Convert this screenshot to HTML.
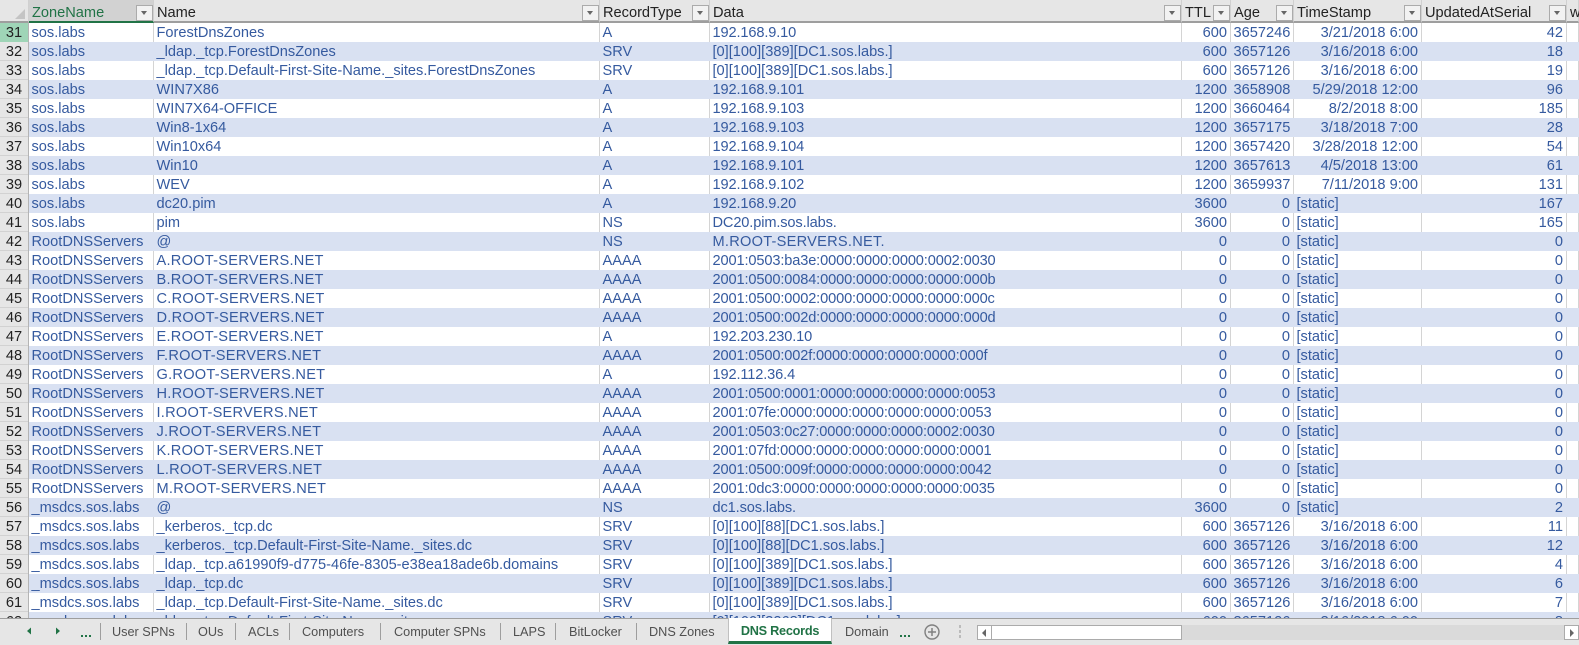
<!DOCTYPE html>
<html><head><meta charset="utf-8"><style>
html,body{margin:0;padding:0;width:1579px;height:644px;overflow:hidden;background:#e6e6e6}
#g{position:absolute;left:0;top:0;width:1579px;height:618px;overflow:hidden;background:#fff}
table{border-collapse:separate;border-spacing:0;table-layout:fixed;width:1579px;font:14.6px "Liberation Sans",sans-serif;color:#355a9f}
td,th{height:19px;padding:2px 2px 0 2.5px;box-sizing:border-box;white-space:nowrap;overflow:hidden;border-right:1px solid #d4d4d4;font-weight:normal;text-align:left;line-height:17px}
tbody th{background:#e6e6e6;color:#222;text-align:center;border-right:1px solid #b4b4b4;padding:2px 0 0 0;box-shadow:inset 0 -1px #d2d2d2}
tbody tr:nth-child(even) td{background:#d9e1f2;border-right-color:#d9e1f2}
tbody tr.sel th{background:#9fd5b7;box-shadow:none}
td:nth-child(6),td:nth-child(7),td:nth-child(8),td:nth-child(9){text-align:right;padding-right:3px}
td.l{text-align:left!important}
td:nth-child(5){letter-spacing:-.13px}
tbody tr:nth-child(2) td:nth-child(5),tbody tr:nth-child(3) td:nth-child(5),tbody tr:nth-child(n+27) td:nth-child(5){letter-spacing:0}
tbody tr:nth-child(n+13):nth-child(-n+25) td:nth-child(3),tbody tr:nth-child(12) td:nth-child(5){letter-spacing:.25px}
thead th{height:23px;background:#e6e6e6;color:#222;border-right:1px solid #d0d0d0;border-bottom:2px solid #9e9e9e;position:relative;overflow:visible;padding:5px 0 0 3px;line-height:16px}
thead th.z{background:#d2d2d2;color:#217346;border-bottom:2px solid #217346}
thead th i{position:absolute;top:5px;right:0;width:15px;height:14px;background:#f2f2f2;border:1px solid #ababab}
thead th i:after{content:"";position:absolute;left:4px;top:5px;border-left:3.5px solid transparent;border-right:3.5px solid transparent;border-top:4px solid #666}
#c{position:absolute;left:15px;top:9px;width:0;height:0;border-style:solid;border-width:0 0 10px 10px;border-color:transparent transparent #c4c4c4 transparent}
#b{position:absolute;left:0;top:618px;width:1579px;height:26px;background:#e6e6e6;border-top:1px solid #9e9e9e;box-sizing:border-box;font:12.7px "Liberation Sans",sans-serif;color:#505050}
#b span{position:absolute;top:5px;line-height:16px;white-space:nowrap}
#b u{position:absolute;top:4px;width:1px;height:17px;background:#9e9e9e}
#t{position:absolute;left:728px;top:-1px;width:104px;height:26px;background:#fff;border-bottom:3px solid #217346;border-left:1px solid #c0c0c0;border-right:1px solid #c0c0c0;box-sizing:border-box;color:#217346;font-weight:bold;text-align:center;line-height:27px;letter-spacing:-.25px}
#s{position:absolute;left:977px;top:6px;width:602px;height:15px;background:#dadada}
</style></head><body>
<div id="g"><table>
<colgroup><col style="width:29px"><col style="width:125px"><col style="width:446px"><col style="width:110px"><col style="width:472px"><col style="width:49px"><col style="width:63px"><col style="width:128px"><col style="width:145px"><col></colgroup>
<thead><tr><th></th><th class="z">ZoneName<i></i></th><th>Name<i></i></th><th>RecordType<i></i></th><th>Data<i></i></th><th>TTL<i></i></th><th>Age<i></i></th><th>TimeStamp<i></i></th><th>UpdatedAtSerial<i></i></th><th>w</th></tr></thead>
<tbody>
<tr class="sel"><th>31</th><td>sos.labs</td><td>ForestDnsZones</td><td>A</td><td>192.168.9.10</td><td>600</td><td>3657246</td><td>3/21/2018 6:00</td><td>42</td><td></td></tr>
<tr><th>32</th><td>sos.labs</td><td>_ldap._tcp.ForestDnsZones</td><td>SRV</td><td>[0][100][389][DC1.sos.labs.]</td><td>600</td><td>3657126</td><td>3/16/2018 6:00</td><td>18</td><td></td></tr>
<tr><th>33</th><td>sos.labs</td><td>_ldap._tcp.Default-First-Site-Name._sites.ForestDnsZones</td><td>SRV</td><td>[0][100][389][DC1.sos.labs.]</td><td>600</td><td>3657126</td><td>3/16/2018 6:00</td><td>19</td><td></td></tr>
<tr><th>34</th><td>sos.labs</td><td>WIN7X86</td><td>A</td><td>192.168.9.101</td><td>1200</td><td>3658908</td><td>5/29/2018 12:00</td><td>96</td><td></td></tr>
<tr><th>35</th><td>sos.labs</td><td>WIN7X64-OFFICE</td><td>A</td><td>192.168.9.103</td><td>1200</td><td>3660464</td><td>8/2/2018 8:00</td><td>185</td><td></td></tr>
<tr><th>36</th><td>sos.labs</td><td>Win8-1x64</td><td>A</td><td>192.168.9.103</td><td>1200</td><td>3657175</td><td>3/18/2018 7:00</td><td>28</td><td></td></tr>
<tr><th>37</th><td>sos.labs</td><td>Win10x64</td><td>A</td><td>192.168.9.104</td><td>1200</td><td>3657420</td><td>3/28/2018 12:00</td><td>54</td><td></td></tr>
<tr><th>38</th><td>sos.labs</td><td>Win10</td><td>A</td><td>192.168.9.101</td><td>1200</td><td>3657613</td><td>4/5/2018 13:00</td><td>61</td><td></td></tr>
<tr><th>39</th><td>sos.labs</td><td>WEV</td><td>A</td><td>192.168.9.102</td><td>1200</td><td>3659937</td><td>7/11/2018 9:00</td><td>131</td><td></td></tr>
<tr><th>40</th><td>sos.labs</td><td>dc20.pim</td><td>A</td><td>192.168.9.20</td><td>3600</td><td>0</td><td class="l">[static]</td><td>167</td><td></td></tr>
<tr><th>41</th><td>sos.labs</td><td>pim</td><td>NS</td><td>DC20.pim.sos.labs.</td><td>3600</td><td>0</td><td class="l">[static]</td><td>165</td><td></td></tr>
<tr><th>42</th><td>RootDNSServers</td><td>@</td><td>NS</td><td>M.ROOT-SERVERS.NET.</td><td>0</td><td>0</td><td class="l">[static]</td><td>0</td><td></td></tr>
<tr><th>43</th><td>RootDNSServers</td><td>A.ROOT-SERVERS.NET</td><td>AAAA</td><td>2001:0503:ba3e:0000:0000:0000:0002:0030</td><td>0</td><td>0</td><td class="l">[static]</td><td>0</td><td></td></tr>
<tr><th>44</th><td>RootDNSServers</td><td>B.ROOT-SERVERS.NET</td><td>AAAA</td><td>2001:0500:0084:0000:0000:0000:0000:000b</td><td>0</td><td>0</td><td class="l">[static]</td><td>0</td><td></td></tr>
<tr><th>45</th><td>RootDNSServers</td><td>C.ROOT-SERVERS.NET</td><td>AAAA</td><td>2001:0500:0002:0000:0000:0000:0000:000c</td><td>0</td><td>0</td><td class="l">[static]</td><td>0</td><td></td></tr>
<tr><th>46</th><td>RootDNSServers</td><td>D.ROOT-SERVERS.NET</td><td>AAAA</td><td>2001:0500:002d:0000:0000:0000:0000:000d</td><td>0</td><td>0</td><td class="l">[static]</td><td>0</td><td></td></tr>
<tr><th>47</th><td>RootDNSServers</td><td>E.ROOT-SERVERS.NET</td><td>A</td><td>192.203.230.10</td><td>0</td><td>0</td><td class="l">[static]</td><td>0</td><td></td></tr>
<tr><th>48</th><td>RootDNSServers</td><td>F.ROOT-SERVERS.NET</td><td>AAAA</td><td>2001:0500:002f:0000:0000:0000:0000:000f</td><td>0</td><td>0</td><td class="l">[static]</td><td>0</td><td></td></tr>
<tr><th>49</th><td>RootDNSServers</td><td>G.ROOT-SERVERS.NET</td><td>A</td><td>192.112.36.4</td><td>0</td><td>0</td><td class="l">[static]</td><td>0</td><td></td></tr>
<tr><th>50</th><td>RootDNSServers</td><td>H.ROOT-SERVERS.NET</td><td>AAAA</td><td>2001:0500:0001:0000:0000:0000:0000:0053</td><td>0</td><td>0</td><td class="l">[static]</td><td>0</td><td></td></tr>
<tr><th>51</th><td>RootDNSServers</td><td>I.ROOT-SERVERS.NET</td><td>AAAA</td><td>2001:07fe:0000:0000:0000:0000:0000:0053</td><td>0</td><td>0</td><td class="l">[static]</td><td>0</td><td></td></tr>
<tr><th>52</th><td>RootDNSServers</td><td>J.ROOT-SERVERS.NET</td><td>AAAA</td><td>2001:0503:0c27:0000:0000:0000:0002:0030</td><td>0</td><td>0</td><td class="l">[static]</td><td>0</td><td></td></tr>
<tr><th>53</th><td>RootDNSServers</td><td>K.ROOT-SERVERS.NET</td><td>AAAA</td><td>2001:07fd:0000:0000:0000:0000:0000:0001</td><td>0</td><td>0</td><td class="l">[static]</td><td>0</td><td></td></tr>
<tr><th>54</th><td>RootDNSServers</td><td>L.ROOT-SERVERS.NET</td><td>AAAA</td><td>2001:0500:009f:0000:0000:0000:0000:0042</td><td>0</td><td>0</td><td class="l">[static]</td><td>0</td><td></td></tr>
<tr><th>55</th><td>RootDNSServers</td><td>M.ROOT-SERVERS.NET</td><td>AAAA</td><td>2001:0dc3:0000:0000:0000:0000:0000:0035</td><td>0</td><td>0</td><td class="l">[static]</td><td>0</td><td></td></tr>
<tr><th>56</th><td>_msdcs.sos.labs</td><td>@</td><td>NS</td><td>dc1.sos.labs.</td><td>3600</td><td>0</td><td class="l">[static]</td><td>2</td><td></td></tr>
<tr><th>57</th><td>_msdcs.sos.labs</td><td>_kerberos._tcp.dc</td><td>SRV</td><td>[0][100][88][DC1.sos.labs.]</td><td>600</td><td>3657126</td><td>3/16/2018 6:00</td><td>11</td><td></td></tr>
<tr><th>58</th><td>_msdcs.sos.labs</td><td>_kerberos._tcp.Default-First-Site-Name._sites.dc</td><td>SRV</td><td>[0][100][88][DC1.sos.labs.]</td><td>600</td><td>3657126</td><td>3/16/2018 6:00</td><td>12</td><td></td></tr>
<tr><th>59</th><td>_msdcs.sos.labs</td><td>_ldap._tcp.a61990f9-d775-46fe-8305-e38ea18ade6b.domains</td><td>SRV</td><td>[0][100][389][DC1.sos.labs.]</td><td>600</td><td>3657126</td><td>3/16/2018 6:00</td><td>4</td><td></td></tr>
<tr><th>60</th><td>_msdcs.sos.labs</td><td>_ldap._tcp.dc</td><td>SRV</td><td>[0][100][389][DC1.sos.labs.]</td><td>600</td><td>3657126</td><td>3/16/2018 6:00</td><td>6</td><td></td></tr>
<tr><th>61</th><td>_msdcs.sos.labs</td><td>_ldap._tcp.Default-First-Site-Name._sites.dc</td><td>SRV</td><td>[0][100][389][DC1.sos.labs.]</td><td>600</td><td>3657126</td><td>3/16/2018 6:00</td><td>7</td><td></td></tr>
<tr><th>62</th><td>_msdcs.sos.labs</td><td>_ldap._tcp.Default-First-Site-Name._sites</td><td>SRV</td><td>[0][100][3268][DC1.sos.labs.]</td><td>600</td><td>3657126</td><td>3/16/2018 6:00</td><td>8</td><td></td></tr>
</tbody></table><div id="c"></div></div>
<div id="b">
<svg style="position:absolute;left:0;top:0" width="100" height="25"><path d="M27 12 L31 8.5 V15.5Z M56 8.5 L60 12 L56 15.5Z" fill="#217346"/><rect x="81" y="16" width="2" height="2" fill="#217346"/><rect x="85" y="16" width="2" height="2" fill="#217346"/><rect x="89" y="16" width="2" height="2" fill="#217346"/></svg>
<u style="left:100px"></u><span style="left:112px">User SPNs</span>
<u style="left:186px"></u><span style="left:198px">OUs</span>
<u style="left:235px"></u><span style="left:248px">ACLs</span>
<u style="left:289px"></u><span style="left:302px">Computers</span>
<u style="left:380px"></u><span style="left:394px">Computer SPNs</span>
<u style="left:500px"></u><span style="left:513px">LAPS</span>
<u style="left:555px"></u><span style="left:569px">BitLocker</span>
<u style="left:636px"></u><span style="left:649px">DNS Zones</span>
<div id="t">DNS Records</div>
<span style="left:845px">Domain</span>
<svg style="position:absolute;left:899px;top:0" width="75" height="25"><rect x="1" y="16" width="2" height="2" fill="#217346"/><rect x="5" y="16" width="2" height="2" fill="#217346"/><rect x="9" y="16" width="2" height="2" fill="#217346"/><circle cx="33" cy="13" r="7" fill="none" stroke="#808080" stroke-width="1.4"/><path d="M29 13H37M33 9V17" stroke="#808080" stroke-width="1.5"/><rect x="60" y="6" width="2" height="3" fill="#bbb"/><rect x="60" y="11" width="2" height="3" fill="#bbb"/><rect x="60" y="16" width="2" height="3" fill="#bbb"/></svg>
<div id="s">
<div style="position:absolute;left:0;top:0;width:205px;height:15px;background:#fff;border:1px solid #ababab;box-sizing:border-box"></div>
<div style="position:absolute;left:0;top:0;width:15px;height:15px;border:1px solid #ababab;box-sizing:border-box;background:#fff"></div>
<div style="position:absolute;left:5px;top:4px;border:4px solid transparent;border-right:4px solid #666;border-left:0"></div>
<div style="position:absolute;left:587px;top:0;width:15px;height:15px;border:1px solid #ababab;box-sizing:border-box;background:#fff"></div>
<div style="position:absolute;left:593px;top:4px;border:4px solid transparent;border-left:4px solid #666;border-right:0"></div>
</div>
</div>
</body></html>
